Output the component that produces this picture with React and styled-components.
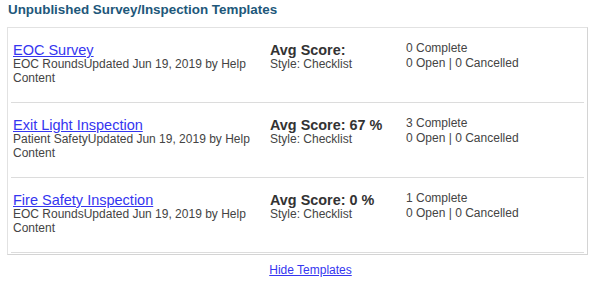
import React from "react";
import styled, { createGlobalStyle } from "styled-components";

const GlobalStyle = createGlobalStyle`
  body {
    margin: 0;
    background: #fff;
    font-family: "Liberation Sans", Arial, sans-serif;
  }
`;

const templates = [
  {
    name: "EOC Survey",
    category: "EOC Rounds",
    updated: "Jun 19, 2019",
    by: "Help Content",
    score: "",
    complete: 0,
    open: 0,
    cancelled: 0,
  },
  {
    name: "Exit Light Inspection",
    category: "Patient Safety",
    updated: "Jun 19, 2019",
    by: "Help Content",
    score: "67 %",
    complete: 3,
    open: 0,
    cancelled: 0,
  },
  {
    name: "Fire Safety Inspection",
    category: "EOC Rounds",
    updated: "Jun 19, 2019",
    by: "Help Content",
    score: "0 %",
    complete: 1,
    open: 0,
    cancelled: 0,
  },
];

const App = () => {
  return (
    <StPage>
      <GlobalStyle />
      <StTitle>Unpublished Survey/Inspection Templates</StTitle>
      <StPanel>
        {templates.map((t) => (
          <StRow key={t.name}>
            <StInfo>
              <StLink href="#">{t.name}</StLink>
              <StMeta>
                {t.category}Updated {t.updated} by {t.by}
              </StMeta>
            </StInfo>
            <StScore>
              <StScoreValue>Avg Score: {t.score}</StScoreValue>
              <StMeta>Style: Checklist</StMeta>
            </StScore>
            <StCounts>
              <div>{t.complete} Complete</div>
              <div>
                {t.open} Open | {t.cancelled} Cancelled
              </div>
            </StCounts>
          </StRow>
        ))}
      </StPanel>
      <StFooter>
        <StSmallLink href="#">Hide Templates</StSmallLink>
      </StFooter>
    </StPage>
  );
};

export default App;

const StPage = styled.div`
  width: 581px;
  padding: 2px 0 0 7px;
`;

const StTitle = styled.h3`
  margin: 0 0 9px 1px;
  font-size: 13.4px;
  font-weight: bold;
  color: #21577a;
  line-height: 16px;
`;

const StPanel = styled.div`
  border: 1px solid #e2e2e2;
  border-right-color: #d4d4d4;
  border-bottom-color: #d4d4d4;
  padding: 0 3px 1px 3px;
`;

const StRow = styled.div`
  display: grid;
  grid-template-columns: 257px 136px 1fr;
  padding: 12px 2px 0 2px;
  height: 62px;
  border-bottom: 1px solid #dcdcdc;
`;

const StInfo = styled.div`
  display: flex;
  flex-direction: column;
  align-items: flex-start;
  padding: 3px 8px 0 0;
`;

const StLink = styled.a`
  font-size: 14.5px;
  line-height: 14px;
  color: #3535f0;
  text-decoration: underline;
`;

const StMeta = styled.div`
  font-size: 12px;
  line-height: 14px;
  color: #444;
`;

const StScore = styled.div`
  display: flex;
  flex-direction: column;
  padding-top: 3px;
`;

const StScoreValue = styled.div`
  font-size: 14.4px;
  line-height: 14px;
  font-weight: bold;
  color: #333;
`;

const StCounts = styled.div`
  padding-top: 1px;
  font-size: 12px;
  line-height: 15px;
  color: #444;
`;

const StFooter = styled.div`
  display: flex;
  justify-content: center;
  padding: 8px 0 0 26px;
`;

const StSmallLink = styled.a`
  font-size: 12px;
  line-height: 15px;
  color: #3535f0;
  text-decoration: underline;
`;
